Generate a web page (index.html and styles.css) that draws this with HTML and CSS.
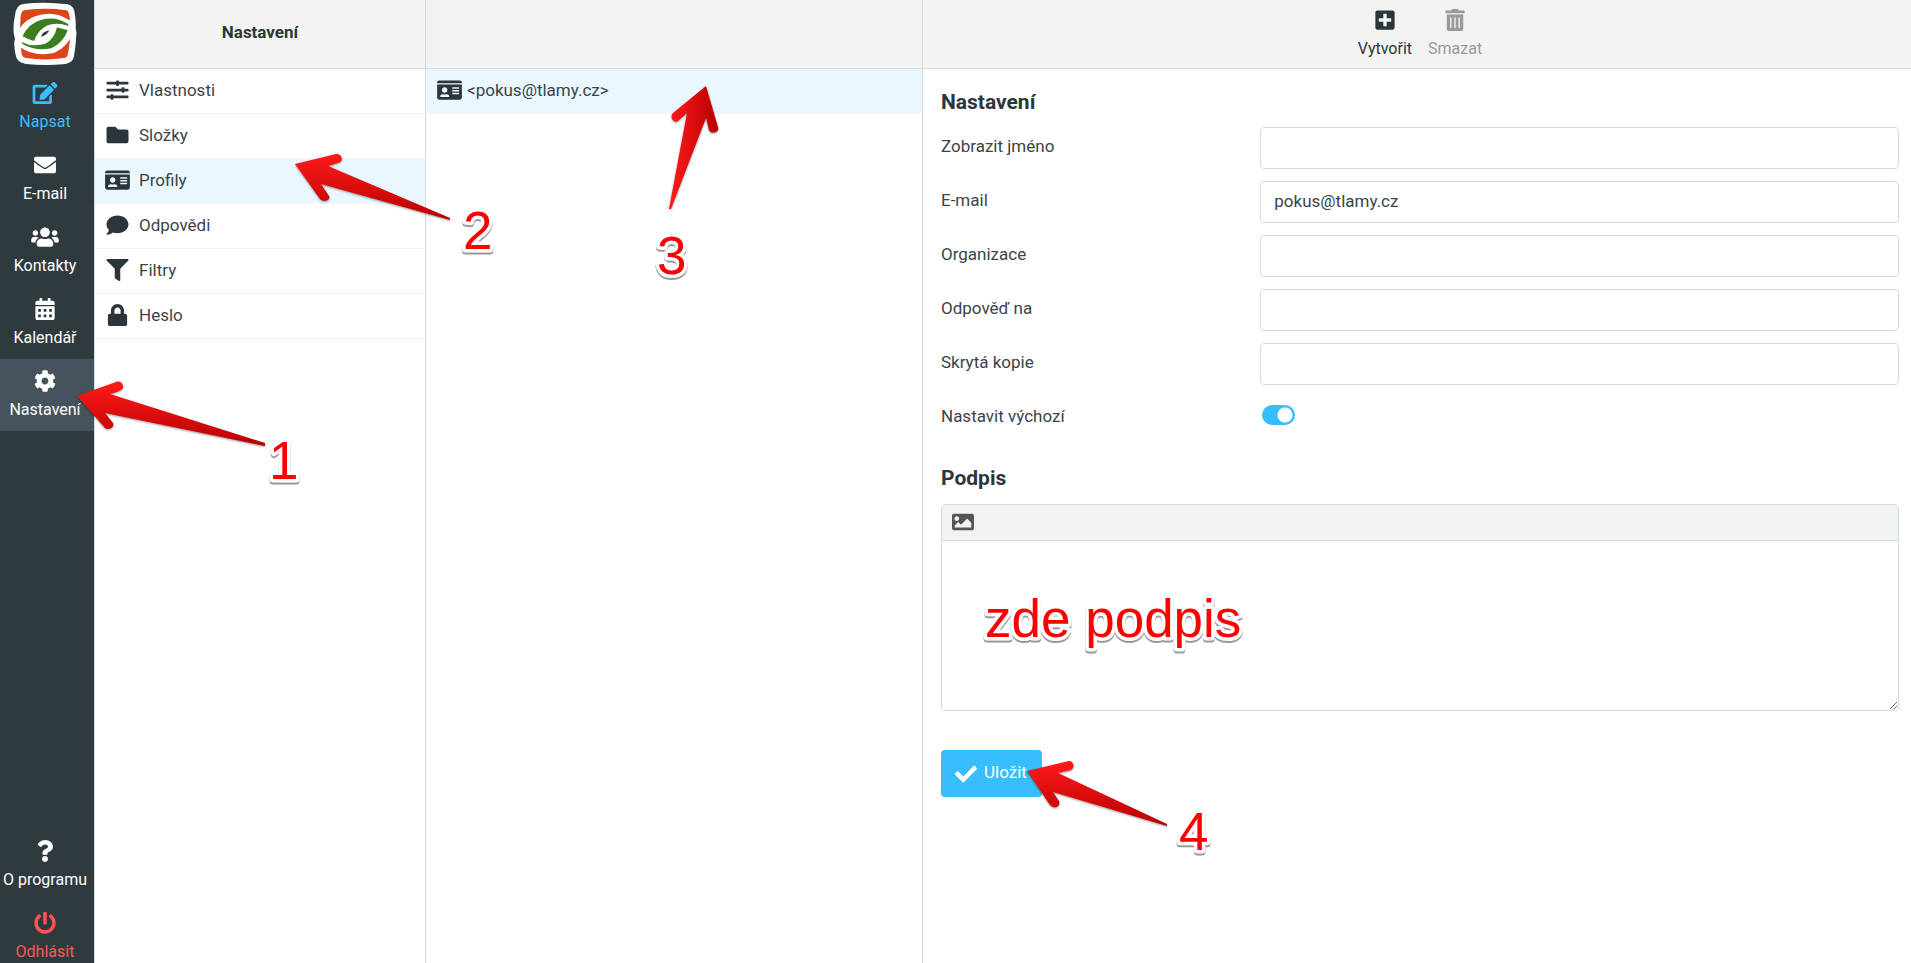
FILE: index.html
```
<!DOCTYPE html>
<html lang="cs">
<head>
  <meta charset="UTF-8" />
  <title>Nastavení</title>
  <meta name="viewport" content="width=device-width, initial-scale=1"/>
  <link rel="stylesheet" href="styles.css">
</head>
<body>
  <svg class="sprite" aria-hidden="true">
    <symbol id="i-edit" viewBox="0 0 576 512"><path d="M402.6 83.2l90.2 90.2c3.8 3.8 3.8 10 0 13.8L274.4 405.6l-92.8 10.3c-12.4 1.4-22.9-9.1-21.5-21.5l10.3-92.8L388.8 83.2c3.8-3.8 10-3.8 13.8 0zm162-22.9l-48.8-48.8c-15.2-15.2-39.9-15.2-55.2 0l-35.4 35.4c-3.8 3.8-3.8 10 0 13.8l90.2 90.2c3.8 3.8 10 3.8 13.8 0l35.4-35.4c15.2-15.3 15.2-40 0-55.2zM384 346.2V448H64V128h229.8c3.2 0 6.2-1.3 8.5-3.5l40-40c7.6-7.6 2.2-20.5-8.5-20.5H48C21.5 64 0 85.5 0 112v352c0 26.5 21.5 48 48 48h352c26.5 0 48-21.5 48-48V306.2c0-10.7-12.9-16-20.5-8.5l-40 40c-2.2 2.3-3.5 5.3-3.5 8.5z"/></symbol>
    <symbol id="i-mail" viewBox="0 0 512 512"><path d="M502.3 190.8c3.9-3.1 9.7-.2 9.7 4.7V400c0 26.5-21.5 48-48 48H48c-26.5 0-48-21.5-48-48V195.6c0-5 5.7-7.8 9.7-4.7 22.4 17.4 52.1 39.5 154.1 113.6 21.1 15.4 56.7 47.8 92.2 47.6 35.7.3 72-32.8 92.3-47.6 102-74.1 131.6-96.3 154-113.7zM256 320c23.2.4 56.6-29.2 73.4-41.4 132.7-96.3 142.8-104.7 173.4-128.7 5.8-4.5 9.2-11.5 9.2-18.9v-19c0-26.5-21.5-48-48-48H48c-26.5 0-48 21.5-48 48v19c0 7.4 3.4 14.3 9.2 18.9 30.6 23.9 40.7 32.4 173.4 128.7 16.8 12.2 50.2 41.8 73.4 41.4z"/></symbol>
    <symbol id="i-users" viewBox="0 0 640 512"><path d="M96 224c35.3 0 64-28.7 64-64s-28.7-64-64-64-64 28.7-64 64 28.7 64 64 64zm448 0c35.3 0 64-28.7 64-64s-28.7-64-64-64-64 28.7-64 64 28.7 64 64 64zm32 32h-64c-17.6 0-33.5 7.1-45.1 18.6 40.3 22.1 68.9 62 75.1 109.4h66c17.7 0 32-14.3 32-32v-32c0-35.3-28.7-64-64-64zm-256 0c61.9 0 112-50.1 112-112S381.9 32 320 32 208 82.1 208 144s50.1 112 112 112zm76.8 32h-8.3c-20.8 10-43.9 16-68.5 16s-47.6-6-68.5-16h-8.3C179.6 288 128 339.6 128 403.2V432c0 26.5 21.5 48 48 48h288c26.5 0 48-21.5 48-48v-28.8c0-63.6-51.6-115.2-115.2-115.2zm-223.7-13.4C161.5 263.1 145.6 256 128 256H64c-35.3 0-64 28.7-64 64v32c0 17.7 14.3 32 32 32h65.9c6.3-47.4 34.9-87.3 75.2-109.4z"/></symbol>
    <symbol id="i-calendar" viewBox="0 0 448 512"><path fill-rule="evenodd" d="M400 64h-48V16c0-8.800-7.200-16-16-16h-32c-8.800 0-16 7.200-16 16v48H160V16c0-8.800-7.200-16-16-16h-32c-8.800 0-16 7.200-16 16v48H48C21.500 64 0 85.500 0 112v48h448v-48c0-26.500-21.500-48-48-48zM0 192v272c0 26.500 21.500 48 48 48h352c26.500 0 48-21.500 48-48V192zM64 256h64v64H64zM192 256h64v64h-64zM320 256h64v64h-64zM64 384h64v64H64zM192 384h64v64h-64zM320 384h64v64h-64z"/></symbol>
    <symbol id="i-cog" viewBox="0 0 512 512"><path d="M487.4 315.7l-42.6-24.6c4.3-23.2 4.3-47 0-70.2l42.6-24.6c4.9-2.8 7.1-8.6 5.5-14-11.1-35.6-30-67.8-54.7-94.6-3.8-4.1-10-5.1-14.8-2.3L380.8 110c-17.9-15.4-38.5-27.3-60.8-35.1V25.8c0-5.6-3.9-10.5-9.4-11.7-36.7-8.2-74.3-7.8-109.2 0-5.5 1.2-9.4 6.1-9.4 11.7V75c-22.2 7.9-42.8 19.8-60.8 35.1L88.7 85.5c-4.9-2.8-11-1.9-14.8 2.3-24.7 26.7-43.6 58.9-54.7 94.6-1.7 5.4.6 11.2 5.5 14L67.3 221c-4.3 23.2-4.3 47 0 70.2l-42.6 24.6c-4.9 2.8-7.1 8.6-5.5 14 11.1 35.6 30 67.8 54.7 94.6 3.8 4.1 10 5.1 14.8 2.3l42.6-24.6c17.9 15.4 38.5 27.3 60.8 35.1v49.2c0 5.6 3.9 10.5 9.4 11.7 36.7 8.2 74.3 7.8 109.2 0 5.5-1.2 9.4-6.1 9.4-11.7v-49.2c22.2-7.900 42.8-19.8 60.8-35.1l42.6 24.6c4.9 2.8 11 1.9 14.8-2.3 24.7-26.7 43.6-58.9 54.7-94.6 1.5-5.500-.7-11.300-5.600-14.100zM256 336c-44.1 0-80-35.9-80-80s35.9-80 80-80 80 35.9 80 80-35.9 80-80 80z"/></symbol>
    <symbol id="i-question" viewBox="0 0 384 512"><path d="M202.021 0C122.202 0 70.503 32.703 29.914 91.026c-7.363 10.58-5.093 25.086 5.178 32.874l43.138 32.709c10.373 7.865 25.132 6.026 33.253-4.148 25.049-31.381 43.63-49.449 82.757-49.449 30.764 0 68.816 19.799 68.816 49.631 0 22.552-18.617 34.134-48.993 51.164-35.423 19.86-82.299 44.576-82.299 106.405V320c0 13.255 10.745 24 24 24h72.471c13.255 0 24-10.745 24-24v-5.773c0-42.86 125.268-44.645 125.268-160.627C377.504 66.256 286.902 0 202.021 0zM192 373.459c-38.196 0-69.271 31.075-69.271 69.271 0 38.195 31.075 69.27 69.271 69.27s69.271-31.075 69.271-69.271-31.075-69.27-69.271-69.27z"/></symbol>
    <symbol id="i-power" viewBox="0 0 512 512"><path d="M400 54.1c63 45 104 118.6 104 201.9 0 136.8-110.8 247.7-247.5 248C120 504.3 8.2 393 8 256.4 7.9 173.1 48.9 99.3 111.8 54.2c11.7-8.3 28-4.8 35 7.7L162.6 90c5.9 10.5 3.1 23.8-6.6 31-41.5 30.8-68 79.6-68 134.9-.1 92.3 74.5 168.1 168 168.1 91.6 0 168.6-74.2 168-169.1-.3-51.8-24.7-101.8-68.1-134-9.7-7.2-12.4-20.5-6.5-30.9l15.8-28.1c7-12.4 23.2-16.1 34.8-7.8zM296 264V24c0-13.3-10.7-24-24-24h-32c-13.3 0-24 10.7-24 24v240c0 13.3 10.7 24 24 24h32c13.3 0 24-10.7 24-24z"/></symbol>
    <symbol id="i-sliders" viewBox="0 0 512 512"><path d="M496 384H160v-16c0-8.8-7.2-16-16-16h-32c-8.8 0-16 7.2-16 16v16H16c-8.8 0-16 7.2-16 16v32c0 8.8 7.2 16 16 16h80v16c0 8.8 7.2 16 16 16h32c8.8 0 16-7.2 16-16v-16h336c8.8 0 16-7.2 16-16v-32c0-8.8-7.2-16-16-16zm0-160h-80v-16c0-8.8-7.2-16-16-16h-32c-8.8 0-16 7.2-16 16v16H16c-8.8 0-16 7.2-16 16v32c0 8.8 7.2 16 16 16h336v16c0 8.8 7.2 16 16 16h32c8.8 0 16-7.2 16-16v-16h80c8.8 0 16-7.2 16-16v-32c0-8.8-7.2-16-16-16zm0-160H288V48c0-8.8-7.2-16-16-16h-32c-8.8 0-16 7.2-16 16v16H16C7.2 64 0 71.2 0 80v32c0 8.8 7.2 16 16 16h208v16c0 8.8 7.2 16 16 16h32c8.8 0 16-7.2 16-16v-16h208c8.8 0 16-7.2 16-16V80c0-8.8-7.2-16-16-16z"/></symbol>
    <symbol id="i-folder" viewBox="0 0 512 512"><path d="M464 128H272l-64-64H48C21.49 64 0 85.49 0 112v288c0 26.51 21.49 48 48 48h416c26.51 0 48-21.49 48-48V176c0-26.51-21.49-48-48-48z"/></symbol>
    <symbol id="i-card" viewBox="0 0 576 512"><path fill-rule="evenodd" d="M528 32H48C21.5 32 0 53.5 0 80v16h576V80c0-26.5-21.5-48-48-48zM0 432c0 26.5 21.5 48 48 48h480c26.5 0 48-21.5 48-48V128H0v304zM352 192h160v32H352zM352 256h160v32H352zM352 320h160v32H352zM176 192c35.3 0 64 28.7 64 64s-28.7 64-64 64-64-28.7-64-64 28.7-64 64-64zM67.1 396.2C75.5 370.5 99.6 352 128 352h8.2c12.3 5.1 25.7 8 39.8 8s27.6-2.9 39.8-8h8.2c28.4 0 52.5 18.5 60.9 44.2 3.2 9.9-5.2 19.8-15.6 19.8H82.7c-10.4 0-18.8-10-15.6-19.8z"/></symbol>
    <symbol id="i-comment" viewBox="0 0 512 512"><path d="M256 32C114.6 32 0 125.1 0 240c0 49.6 21.4 95 57 130.7C44.5 421.1 2.7 466 2.2 466.5c-2.2 2.3-2.8 5.7-1.5 8.7S4.8 480 8 480c66.3 0 116-31.8 140.6-51.4 32.7 12.3 69 19.4 107.4 19.4 141.4 0 256-93.1 256-208S397.4 32 256 32z"/></symbol>
    <symbol id="i-filter" viewBox="0 0 512 512"><path d="M487.976 0H24.028C2.71 0-8.047 25.866 7.058 40.971L192 225.941V432c0 7.831 3.821 15.17 10.237 19.662l80 55.98C298.02 518.69 320 507.493 320 487.98V225.941l184.947-184.97C520.021 25.896 509.338 0 487.976 0z"/></symbol>
    <symbol id="i-lock" viewBox="0 0 448 512"><path d="M400 224h-24v-72C376 68.2 307.8 0 224 0S72 68.2 72 152v72H48c-26.5 0-48 21.5-48 48v192c0 26.5 21.5 48 48 48h352c26.5 0 48-21.5 48-48V272c0-26.5-21.5-48-48-48zm-104 0H152v-72c0-39.7 32.3-72 72-72s72 32.3 72 72v72z"/></symbol>
    <symbol id="i-plus" viewBox="0 0 448 512"><path d="M400 32H48C21.5 32 0 53.5 0 80v352c0 26.5 21.5 48 48 48h352c26.5 0 48-21.5 48-48V80c0-26.5-21.5-48-48-48zm-32 252c0 6.6-5.4 12-12 12h-92v92c0 6.6-5.4 12-12 12h-56c-6.6 0-12-5.4-12-12v-92H92c-6.6 0-12-5.4-12-12v-56c0-6.6 5.4-12 12-12h92v-92c0-6.6 5.4-12 12-12h56c6.6 0 12 5.4 12 12v92h92c6.6 0 12 5.4 12 12v56z"/></symbol>
    <symbol id="i-trash" viewBox="0 0 448 512"><path d="M32 464a48 48 0 0 0 48 48h288a48 48 0 0 0 48-48V128H32zm272-256a16 16 0 0 1 32 0v224a16 16 0 0 1-32 0zm-96 0a16 16 0 0 1 32 0v224a16 16 0 0 1-32 0zm-96 0a16 16 0 0 1 32 0v224a16 16 0 0 1-32 0zM432 32H312l-9.4-18.7A24 24 0 0 0 281.1 0H166.8a23.72 23.72 0 0 0-21.4 13.3L136 32H16A16 16 0 0 0 0 48v32a16 16 0 0 0 16 16h416a16 16 0 0 0 16-16V48a16 16 0 0 0-16-16z"/></symbol>
    <symbol id="i-image" viewBox="0 0 512 512"><path d="M464 448H48c-26.51 0-48-21.49-48-48V112c0-26.51 21.49-48 48-48h416c26.51 0 48 21.49 48 48v288c0 26.51-21.49 48-48 48zM112 120c-30.928 0-56 25.072-56 56s25.072 56 56 56 56-25.072 56-56-25.072-56-56-56zM64 384h384V272l-87.515-87.515c-4.686-4.686-12.284-4.686-16.971 0L208 320l-55.515-55.515c-4.686-4.686-12.284-4.686-16.971 0L64 336v48z"/></symbol>
    <symbol id="i-check" viewBox="0 0 512 512"><path d="M173.898 439.404l-166.4-166.4c-9.997-9.997-9.997-26.206 0-36.204l36.203-36.204c9.997-9.998 26.207-9.998 36.204 0L192 312.69 432.095 72.596c9.997-9.997 26.207-9.997 36.204 0l36.203 36.204c9.997 9.997 9.997 26.206 0 36.204l-294.4 294.401c-9.998 9.997-26.207 9.997-36.204-.001z"/></symbol>
  </svg>

  <nav class="taskmenu">
    <svg class="logo" viewBox="36 4 200 194" role="img" aria-label="Logo">
      <path fill="#fff" d="M70 10Q135 2 205 11Q225 15 227 45Q230 62 229 85Q233 95 230 115Q228 150 222 175Q215 191 190 193Q135 198 78 192Q50 188 47 165Q42 140 43 125Q47 115 42 105Q38 80 45 45Q48 13 70 10z"/>
      <path fill="#dd4419" d="M72 29Q136 20 201 29Q210 32 212 60Q214 130 204 168Q202 173 194 174Q136 182 78 174Q68 172 65 160Q58 100 62 50Q64 31 72 29z"/>
      <path fill="#fff" d="M44 125Q52 70 104 48Q160 27 208 58L226 66L222 95Q205 140 165 158Q105 173 56 138z"/>
      <path fill="#3b7d1f" d="M68 108Q85 70 125 58Q170 46 206 71L207 77Q165 62 135 80Q112 95 103 122Q85 118 68 108z"/>
      <path fill="#3b7d1f" d="M65 125Q100 143 138 130Q165 114 172 81Q190 84 205 90Q190 130 155 144Q110 155 68 131z"/>
      <path fill="#2f3a3f" d="M124 109Q128 94 149 90Q143 105 124 109z"/>
    </svg>
    <a class="task compose" href="#"><svg class="icon"><use href="#i-edit"/></svg>Napsat</a>
    <a class="task" href="#"><svg class="icon"><use href="#i-mail"/></svg>E-mail</a>
    <a class="task" href="#"><svg class="icon"><use href="#i-users"/></svg>Kontakty</a>
    <a class="task" href="#"><svg class="icon"><use href="#i-calendar"/></svg>Kalendář</a>
    <a class="task selected" href="#"><svg class="icon"><use href="#i-cog"/></svg>Nastavení</a>
    <div class="task-bottom">
      <a class="task" href="#"><svg class="icon"><use href="#i-question"/></svg>O programu</a>
      <a class="task logout" href="#"><svg class="icon"><use href="#i-power"/></svg>Odhlásit</a>
    </div>
  </nav>

  <section class="panel sections">
    <header class="panel-header"><h1>Nastavení</h1></header>
    <ul class="list">
      <li><a href="#"><svg class="icon"><use href="#i-sliders"/></svg>Vlastnosti</a></li>
      <li><a href="#"><svg class="icon"><use href="#i-folder"/></svg>Složky</a></li>
      <li class="selected"><a href="#"><svg class="icon"><use href="#i-card"/></svg>Profily</a></li>
      <li><a href="#"><svg class="icon"><use href="#i-comment"/></svg>Odpovědi</a></li>
      <li><a href="#"><svg class="icon"><use href="#i-filter"/></svg>Filtry</a></li>
      <li><a href="#"><svg class="icon"><use href="#i-lock"/></svg>Heslo</a></li>
    </ul>
  </section>

  <section class="panel identities">
    <header class="panel-header"></header>
    <ul class="list">
      <li class="selected"><a href="#"><svg class="icon"><use href="#i-card"/></svg>&lt;pokus@tlamy.cz&gt;</a></li>
    </ul>
  </section>

  <main class="panel content">
    <header class="panel-header toolbar">
      <button type="button"><svg class="icon"><use href="#i-plus"/></svg>Vytvořit</button>
      <button type="button" disabled><svg class="icon"><use href="#i-trash"/></svg>Smazat</button>
    </header>
    <form class="form">
      <h2>Nastavení</h2>
      <div class="row"><label for="name">Zobrazit jméno</label><input type="text" id="name"></div>
      <div class="row"><label for="email">E-mail</label><input type="text" id="email" value="pokus@tlamy.cz"></div>
      <div class="row"><label for="org">Organizace</label><input type="text" id="org"></div>
      <div class="row"><label for="replyto">Odpověď na</label><input type="text" id="replyto"></div>
      <div class="row"><label for="bcc">Skrytá kopie</label><input type="text" id="bcc"></div>
      <div class="row"><label for="default">Nastavit výchozí</label><input type="checkbox" class="switch" id="default" checked></div>

      <h2 class="signature-title" id="sig-title">Podpis</h2>
      <div class="editor">
        <div class="editor-bar">
          <button type="button" aria-label="Obrázek"><svg class="icon"><use href="#i-image"/></svg></button>
        </div>
        <textarea aria-labelledby="sig-title"></textarea>
      </div>

      <button type="button" class="save"><svg class="icon"><use href="#i-check"/></svg>Uložit</button>
    </form>
  </main>

  <!-- step arrows and numbers over the page -->
  <svg class="notes">
    <defs>
      <linearGradient id="red" x1="0" y1="0" x2="0" y2="1">
        <stop offset="0" stop-color="#ff1a1a"/>
        <stop offset="1" stop-color="#b80000"/>
      </linearGradient>
      <linearGradient id="red-side" x1="0" y1="0" x2="1" y2="0">
        <stop offset="0" stop-color="#ff1a1a"/>
        <stop offset="1" stop-color="#b80000"/>
      </linearGradient>
    </defs>
    <g class="arrows">
      <path fill="url(#red)" d="M77 396L116 382C121 380 124 385 123 388Q122 391 110 394L265 443V446L105 413L113 423C115 427 109 431 105 428z"/>
      <path fill="url(#red)" d="M295 164L336 154C341 153 344 160 340 162Q338 163 328 166L450 218V220L321 184L329 196C331 200 324 203 320 199z"/>
      <path fill="url(#red-side)" d="M706 86L718 127C720 132 711 135 709 130L706 118L671 209H669L687 113L678 121C674 124 669 117 673 113z"/>
      <path fill="url(#red)" d="M1027 771L1069 761C1074 761 1075 768 1071 770L1058 773L1167 824V826L1053 792L1059 801C1061 806 1055 810 1050 805z"/>
    </g>
    <g class="labels">
      <text x="269" y="479">1</text>
      <text x="463" y="249">2</text>
      <text x="657" y="274">3</text>
      <text x="1179" y="850">4</text>
      <text x="985" y="637">zde podpis</text>
    </g>
  </svg>
</body>
</html>
```

FILE: styles.css
```
* {
  box-sizing: border-box;
}
body {
  margin: 0;
  display: flex;
  position: relative;
  min-height: 100vh;
  background: #fff;
  color: #3b4448;
  font-family: Roboto, "Liberation Sans", sans-serif;
  font-size: 17px;
  line-height: 24px;
}
a {
  color: inherit;
  text-decoration: none;
}
button, input, textarea {
  font: inherit;
  color: inherit;
}
button {
  border: none;
  background: none;
  padding: 0;
  cursor: pointer;
}
.sprite {
  display: none;
}
.icon {
  display: block;
  flex: none;
  width: 28px;
  height: 22px;
  fill: currentColor;
}

/* left task menu */
.taskmenu {
  flex: none;
  width: 94px;
  display: flex;
  flex-direction: column;
  background: #2f3a3f;
  color: #fff;
}
.logo {
  width: 66px;
  height: 64px;
  margin: 2px 0 5px 12px;
}
.task {
  display: flex;
  flex-direction: column;
  align-items: center;
  gap: 6px;
  height: 72px;
  padding: 11px 4px 0 0;
  font-size: 16px;
  white-space: nowrap;
}
.task.selected {
  background: #45545c;
}
.compose {
  color: #37beff;
}
.logout {
  color: #ff5552;
}
.task-bottom {
  margin-top: auto;
}
.task-bottom .logout {
  height: 62px;
}

/* columns */
.panel {
  border-left: 1px solid #d4dbde;
}
.sections {
  flex: none;
  width: 331px;
}
.identities {
  flex: none;
  width: 497px;
}
.content {
  flex: 1;
  min-width: 0;
}
.panel-header {
  display: flex;
  align-items: center;
  justify-content: center;
  height: 69px;
  padding-bottom: 4px;
  background: #f3f3f3;
  border-bottom: 1px solid #d4dbde;
}
h1 {
  margin: 0;
  font-size: 17px;
  font-weight: bold;
  color: #2c363a;
}

.list {
  list-style: none;
  margin: 0;
  padding: 0;
}
.list li {
  border-bottom: 1px solid #f1f3f4;
}
.list .selected {
  background: #eaf7fe;
}
.list a {
  display: flex;
  align-items: center;
  gap: 9px;
  height: 44px;
  padding: 0 10px 2px;
}
.list .icon {
  width: 25px;
  color: #2c363a;
}
.identities .list a {
  gap: 5px;
  padding-left: 11px;
}

.toolbar {
  gap: 16px;
  padding: 2px 0 0 6px;
  font-size: 16px;
  color: #2c363a;
}
.toolbar button {
  display: flex;
  flex-direction: column;
  align-items: center;
  gap: 6px;
}
.toolbar button:disabled {
  color: #969b9c;
}

/* identity form */
.form {
  padding: 21px 12px 0 18px;
}
h2 {
  margin: 0 0 13px;
  font-size: 21px;
  line-height: 24px;
  font-weight: bold;
  color: #2c363a;
}
.row {
  display: grid;
  grid-template-columns: 1fr 2fr;
  align-items: center;
  height: 42px;
  margin-bottom: 12px;
}
.row label {
  padding-bottom: 4px;
}
.row input[type="text"] {
  width: 100%;
  height: 42px;
  padding: 0 13px 2px;
  border: 1px solid #d4dbde;
  border-radius: 4px;
  background: #fff;
}
.switch {
  appearance: none;
  width: 33px;
  height: 20px;
  margin: 0 0 6px 2px;
  border-radius: 10px;
  background: radial-gradient(circle at 23px 10px, #fff 7px, #37beff 8px);
}
.signature-title {
  margin: 27px 0 14px;
}
.editor {
  border: 1px solid #d4dbde;
  border-radius: 4px;
  overflow: hidden;
}
.editor-bar {
  height: 36px;
  padding: 6px 7px;
  background: #f0f2f4;
  border-bottom: 1px solid #d4dbde;
  color: #555;
}
textarea {
  display: block;
  width: 100%;
  height: 169px;
  padding: 12px;
  border: none;
  resize: vertical;
}
.save {
  display: flex;
  justify-content: center;
  gap: 4px;
  height: 47px;
  margin-top: 39px;
  padding: 10px 15px 0 11px;
  border-radius: 4px;
  background: #37beff;
  color: #fff;
}
.save .icon {
  margin-top: 3px;
}

.notes {
  position: absolute;
  top: 0;
  left: 0;
  width: 100%;
  height: 100%;
  pointer-events: none;
}
.arrows {
  filter: drop-shadow(0 1px 1px #0006);
}
.labels {
  font-family: "Liberation Sans", Arial, sans-serif;
  font-size: 53px;
  fill: #f00;
  stroke: #fff;
  stroke-width: 7px;
  stroke-linejoin: round;
  paint-order: stroke;
  filter: drop-shadow(0 2px 0 #999);
}
```
